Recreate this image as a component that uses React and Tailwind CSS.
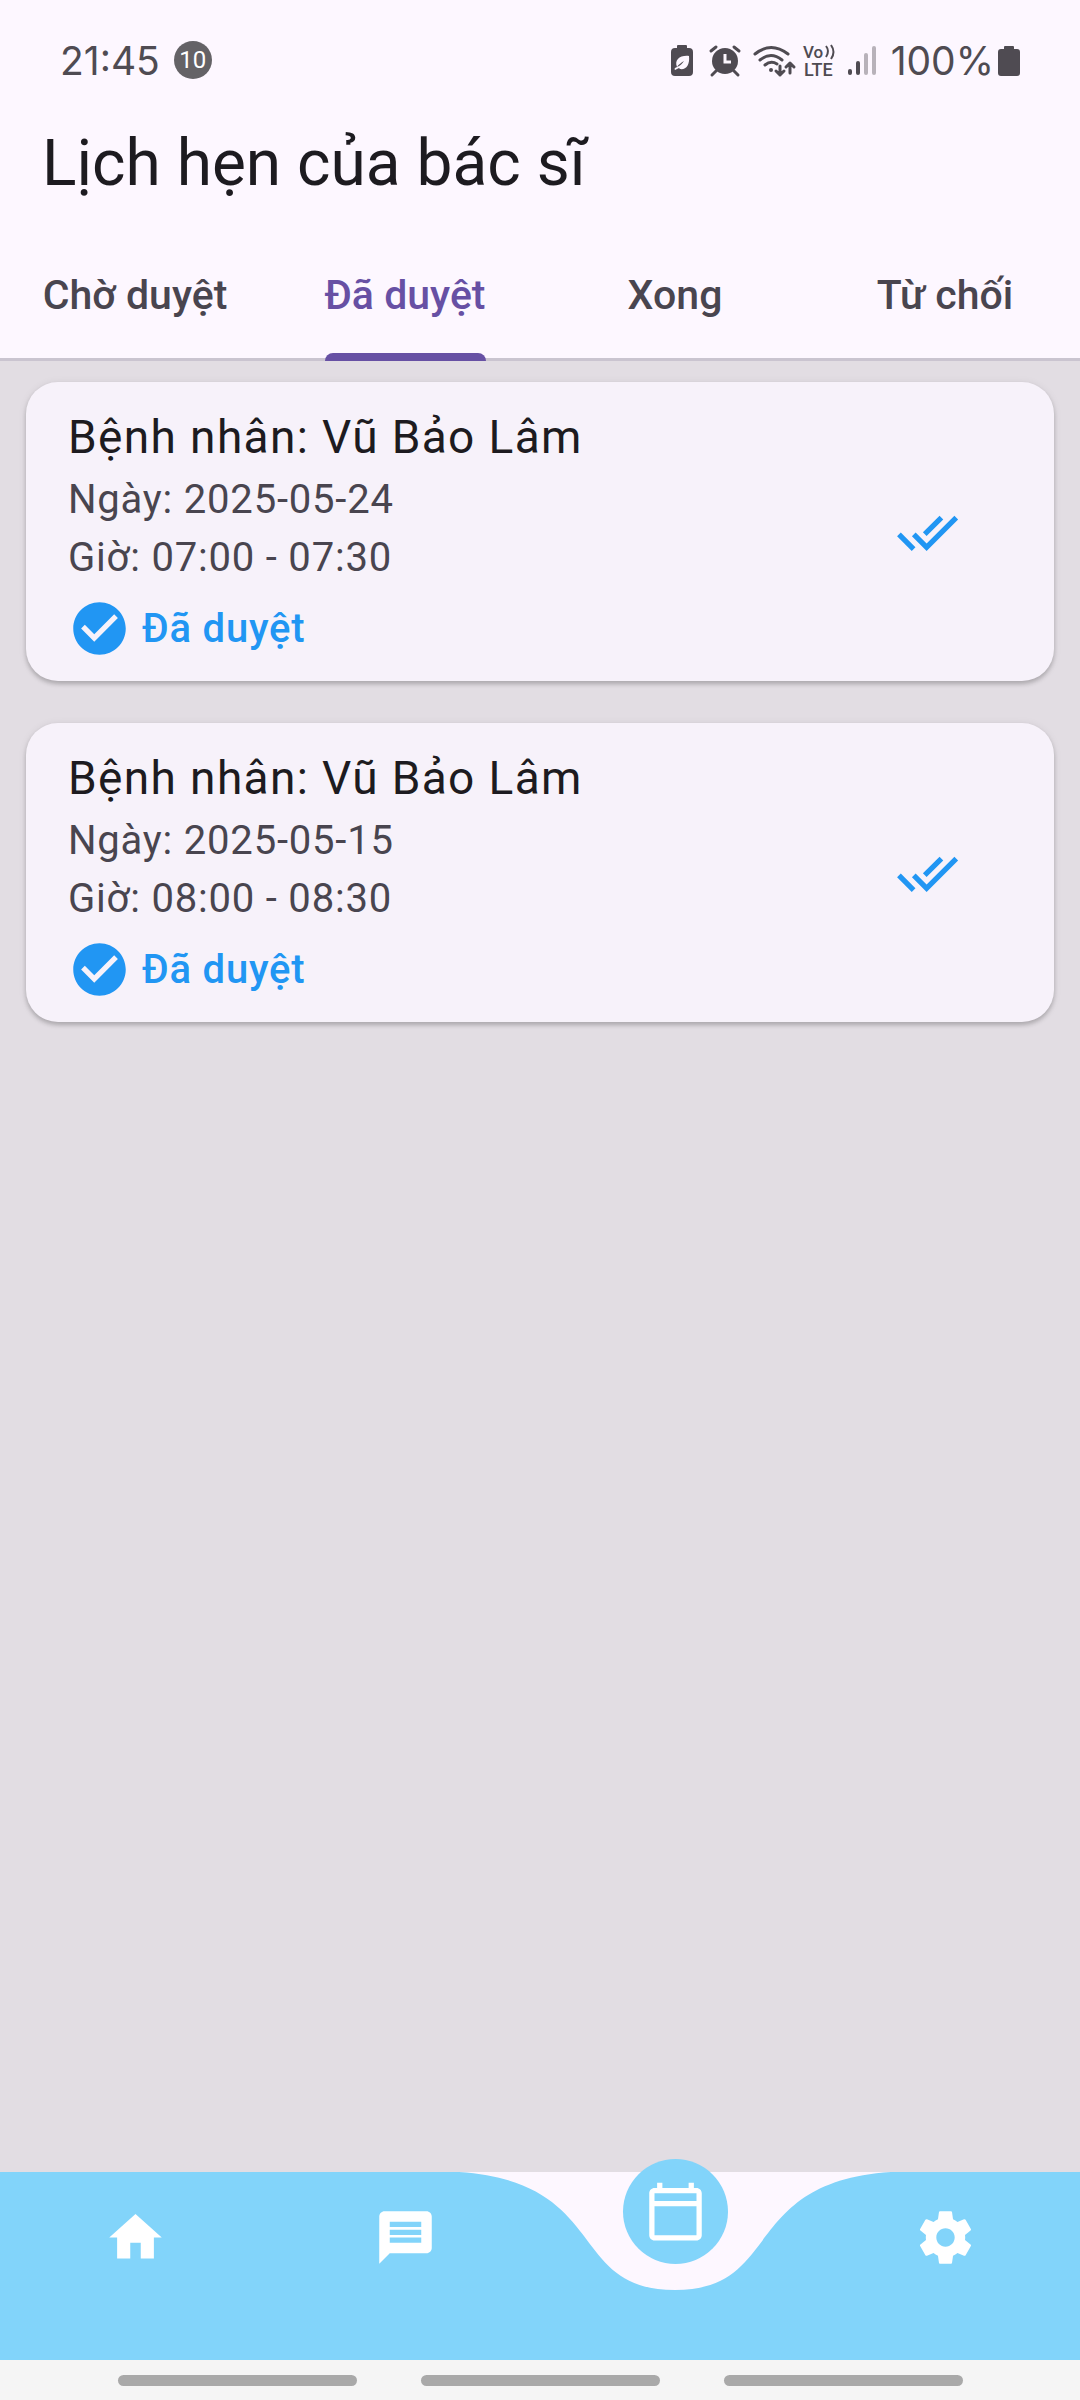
const TABS = ["Chờ duyệt", "Đã duyệt", "Xong", "Từ chối"];

const APPOINTMENTS = [
  { patient: "Vũ Bảo Lâm", date: "2025-05-24", time: "07:00 - 07:30" },
  { patient: "Vũ Bảo Lâm", date: "2025-05-15", time: "08:00 - 08:30" },
];

const PATHS = {
  home: "M10 20v-6h4v6h5v-8h3L12 3 2 12h3v8z",
  message:
    "M20 2H4c-1.1 0-1.99.9-1.99 2L2 22l4-4h14c1.1 0 2-.9 2-2V4c0-1.1-.9-2-2-2zm-2 12H6v-2h12v2zm0-3H6V9h12v2zm0-3H6V6h12v2z",
  calendar:
    "M20 3h-1V1h-2v2H7V1H5v2H4c-1.1 0-2 .9-2 2v16c0 1.1.9 2 2 2h16c1.1 0 2-.9 2-2V5c0-1.1-.9-2-2-2zm0 18H4V10h16v11zm0-13H4V5h16v3z",
  settings:
    "M19.43 12.98c.04-.32.07-.64.07-.98s-.03-.66-.07-.98l2.11-1.65c.19-.15.24-.42.12-.64l-2-3.46c-.12-.22-.39-.3-.61-.22l-2.49 1c-.52-.4-1.08-.73-1.69-.98l-.38-2.65C14.46 2.18 14.25 2 14 2h-4c-.25 0-.46.18-.49.42l-.38 2.65c-.61.25-1.17.59-1.69.98l-2.49-1c-.23-.09-.49 0-.61.22l-2 3.46c-.13.22-.07.49.12.64l2.11 1.65c-.04.32-.07.65-.07.98s.03.66.07.98l-2.11 1.65c-.19.15-.24.42-.12.64l2 3.46c.12.22.39.3.61.22l2.49-1c.52.4 1.08.73 1.69.98l.38 2.65c.03.24.24.42.49.42h4c.25 0 .46-.18.49-.42l.38-2.65c.61-.25 1.17-.59 1.69-.98l2.49 1c.23.09.49 0 .61-.22l2-3.46c.12-.22.07-.49-.12-.64l-2.11-1.65zM12 15.5c-1.93 0-3.5-1.57-3.5-3.5s1.57-3.5 3.5-3.5 3.5 1.57 3.5 3.5-1.57 3.5-3.5 3.5z",
  checkCircle:
    "M12 2C6.48 2 2 6.48 2 12s4.48 10 10 10 10-4.48 10-10S17.52 2 12 2zm-2 15l-5-5 1.41-1.41L10 14.17l7.59-7.59L19 8l-9 9z",
  doneAll:
    "M18 7l-1.41-1.41-6.34 6.34 1.41 1.41L18 7zm4.24-1.41L11.66 16.17 7.48 12l-1.41 1.41L11.66 19l12-12-1.42-1.41zM.41 13.41L6 19l1.41-1.41L1.83 12 .41 13.41z",
};

function Icon({ name, className }) {
  return (
    <svg viewBox="0 0 24 24" fill="currentColor" className={className} aria-hidden="true">
      <path d={PATHS[name]} />
    </svg>
  );
}

function StatusIcons() {
  return (
    <svg viewBox="0 -6 206 48" className="h-12 w-[206px]" fill="currentColor" aria-hidden="true">
      {/* power saving battery */}
      <path d="M6 6V4q0-1 1-1h8q1 0 1 1v2h2q4 0 4 4v20q0 4-4 4H4q-4 0-4-4V10q0-4 4-4z" />
      <path d="M6 25C3 18 9 13 18 14c1 9-3 14-9 13l-1-1-4 2q-1-1 0-2l2-1c3-1 5-3 7-6-3 2-5 3-7 6z" fill="#fdf7ff" />
      {/* alarm clock */}
      <circle cx="54" cy="19" r="13" />
      <path
        d="M40 9l5-4M68 9l-5-4M45 29l-4 4M63 29l4 4"
        fill="none"
        stroke="currentColor"
        strokeWidth="3"
        strokeLinecap="round"
      />
      <path d="M54 12v8h6" fill="none" stroke="#fdf7ff" strokeWidth="3" />
      {/* wifi with transfer arrows */}
      <g fill="none" stroke="currentColor" strokeWidth="3" strokeLinecap="round" strokeLinejoin="round">
        <path d="M84 12q16-13 33 0M89 18q11-9 22 0M94 23q6-5 12-1" />
        <path d="M109 24v9M105 29l4 4 4-4M119 31V21M115 25l4-4 4 4" />
      </g>
      <circle cx="100" cy="28" r="2" />
      {/* VoLTE */}
      <text x="132" y="16" fontSize="17" fontWeight="500" fontFamily="Roboto">
        Vo
      </text>
      <path d="M155 4q4 5 0 11M160 3q5 7 0 14" fill="none" stroke="currentColor" strokeWidth="2" />
      <text x="133" y="34" fontSize="18" fontWeight="500" fontFamily="Roboto">
        LTE
      </text>
      {/* signal strength */}
      <rect x="177" y="27" width="4" height="6" rx="2" />
      <rect x="185" y="19" width="4" height="14" rx="2" />
      <rect x="193" y="11" width="4" height="22" rx="2" opacity=".4" />
      <rect x="201" y="4" width="4" height="29" rx="2" opacity=".4" />
    </svg>
  );
}

function StatusBar() {
  return (
    <div className="flex h-[120px] items-center justify-between px-[60px] text-[#4f4b52]">
      <div className="flex items-center gap-[14px]">
        <span className="font-['Inter',sans-serif] text-[39px] leading-none">21:45</span>
        <span className="flex size-[38px] items-center justify-center rounded-full bg-[#646266] text-[24px] leading-none text-white">
          10
        </span>
      </div>
      <div className="flex items-center">
        <StatusIcons />
        <span className="ml-[14px] font-['Inter',sans-serif] text-[39px] leading-none">100%</span>
        <svg viewBox="0 0 22 31" className="ml-1 h-[31px] w-[22px]" fill="currentColor" aria-hidden="true">
          <path d="M6 4V2q0-1 1-1h8q1 0 1 1v2h3q3 0 3 3v21q0 3-3 3H3q-3 0-3-3V7q0-3 3-3z" />
        </svg>
      </div>
    </div>
  );
}

function Tabs() {
  return (
    <div role="tablist" className="grid h-[127px] grid-cols-4 border-b-[3px] border-[#cac4d0]">
      {TABS.map((label, i) => (
        <button
          key={label}
          type="button"
          role="tab"
          aria-selected={i === 1}
          className={
            "flex items-center justify-center text-[41px] font-medium " +
            (i === 1 ? "text-[#6750a4]" : "text-[#49454f]")
          }
        >
          <span className="relative flex h-full items-center">
            {label}
            {i === 1 && <span className="absolute inset-x-0 -bottom-[3px] h-2 rounded-t-lg bg-[#6750a4]" />}
          </span>
        </button>
      ))}
    </div>
  );
}

function AppointmentCard({ patient, date, time }) {
  return (
    <li className="flex items-center justify-between rounded-[32px] bg-[#f7f2fa] pt-[22px] pr-[95px] pb-[21px] pl-[42px] shadow-[0_3px_4px_rgba(0,0,0,0.2),0_1px_8px_rgba(0,0,0,0.08)]">
      <div>
        <h2 className="text-[46px] leading-[67px] tracking-[0.03em] text-[#1d1b20]">Bệnh nhân: {patient}</h2>
        <p className="text-[40px] leading-[58px] tracking-[0.02em] text-[#49454f]">Ngày: {date}</p>
        <p className="text-[40px] leading-[58px] tracking-[0.02em] text-[#49454f]">Giờ: {time}</p>
        <p className="mt-[10px] flex h-[63px] items-center gap-[11px] text-[40px] font-medium tracking-[0.02em] text-[#2196f3]">
          <Icon name="checkCircle" className="size-[63px]" />
          Đã duyệt
        </p>
      </div>
      <Icon name="doneAll" className="size-[63px] text-[#2196f3]" />
    </li>
  );
}

function NavButton({ icon, label }) {
  return (
    <button type="button" aria-label={label} className="relative flex h-[131px] items-center justify-center">
      <Icon name={icon} className="size-[63px]" />
    </button>
  );
}

function BottomNav() {
  return (
    <nav className="relative grid h-[188px] shrink-0 grid-cols-4 bg-[#fdf7ff] text-white">
      <svg viewBox="0 0 1080 188" preserveAspectRatio="none" className="absolute inset-0 size-full" aria-hidden="true">
        <path d="M0 0H459C610 10 567 118 675 118S740 10 891 0H1080V188H0Z" fill="#82d4fa" />
      </svg>
      <NavButton icon="home" label="Trang chủ" />
      <NavButton icon="message" label="Tin nhắn" />
      <button
        type="button"
        aria-label="Lịch hẹn"
        aria-current="page"
        className="relative -mt-[13px] flex size-[105px] items-center justify-center justify-self-center rounded-full bg-[#82d4fa]"
      >
        <Icon name="calendar" className="size-[63px]" />
      </button>
      <NavButton icon="settings" label="Cài đặt" />
    </nav>
  );
}

export default function App() {
  return (
    <div className="flex min-h-screen flex-col bg-[#e2dde3] font-['Roboto',sans-serif]">
      <header className="bg-[#fdf7ff]">
        <StatusBar />
        <h1 className="flex h-[114px] items-center px-[42px] pb-[26px] text-[64px] leading-none text-[#1d1b20]">
          Lịch hẹn của bác sĩ
        </h1>
        <Tabs />
      </header>
      <main className="grow">
        <ul className="flex flex-col gap-[42px] px-[26px] pt-[21px]">
          {APPOINTMENTS.map((a) => (
            <AppointmentCard key={a.date} {...a} />
          ))}
        </ul>
      </main>
      <BottomNav />
      <div className="flex h-10 shrink-0 items-center justify-center gap-16 bg-[#f5f5f5]">
        <span className="h-[11px] w-[239px] rounded-full bg-[#a9a9a9]" />
        <span className="h-[11px] w-[239px] rounded-full bg-[#a9a9a9]" />
        <span className="h-[11px] w-[239px] rounded-full bg-[#a9a9a9]" />
      </div>
    </div>
  );
}
